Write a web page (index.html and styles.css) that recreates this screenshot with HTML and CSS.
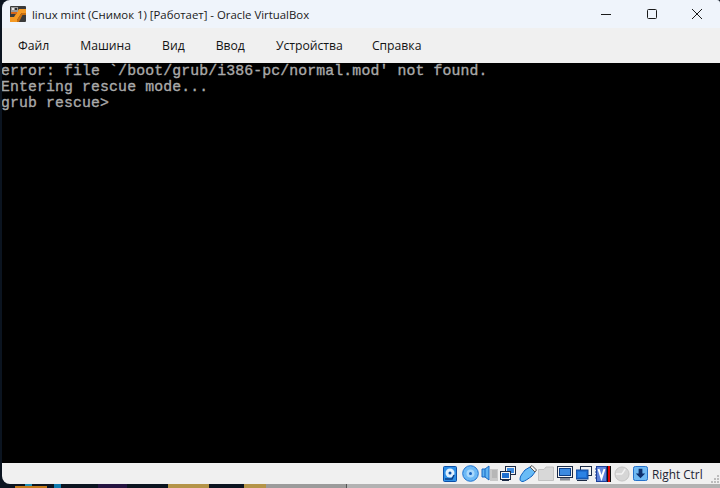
FILE: index.html
```html
<!DOCTYPE html>
<html lang="ru">
<head>
<meta charset="utf-8">
<title>linux mint (Снимок 1) [Работает] - Oracle VirtualBox</title>
<link rel="stylesheet" href="styles.css">
</head>
<body>
<div class="window">
  <header class="titlebar">
    <svg class="app-icon" width="16" height="16" viewBox="0 0 16 16">
      <rect width="16" height="16" rx="1" fill="#3a3a3a"/>
      <path d="M0 16V11H4L9 3H16V7H11.500L7 14V16Z" fill="#f59a24"/>
      <path d="M7 14L11.500 7H16V9H12.500L9 16H7Z" fill="#c96f10"/>
      <rect x="1" y="1" width="7" height="5" fill="#9a9a9a"/>
      <rect x="2" y="2" width="2" height="2" fill="#e8e8e8"/>
      <rect x="5" y="2" width="2" height="2" fill="#333"/>
      <rect x="1" y="6" width="6" height="2" fill="#d4661a"/>
    </svg>
    <span class="title">linux mint (Снимок 1) [Работает] - Oracle VirtualBox</span>
    <div class="controls">
      <span class="ctl"><svg width="10" height="10" viewBox="0 0 10 10"><path d="M0 5.500H10" stroke="#1a1a1a" fill="none"/></svg></span>
      <span class="ctl"><svg width="10" height="10" viewBox="0 0 10 10"><rect x="0.500" y="0.500" width="9" height="9" rx="1" stroke="#1a1a1a" fill="none"/></svg></span>
      <span class="ctl"><svg width="10" height="10" viewBox="0 0 10 10"><path d="M0 0L10 10M10 0L0 10" stroke="#1a1a1a" fill="none"/></svg></span>
    </div>
  </header>
  <nav class="menubar">
    <span>Файл</span><span>Машина</span><span>Вид</span><span>Ввод</span><span>Устройства</span><span class="menu-last">Справка</span>
  </nav>
  <main class="screen">
<pre class="console">error: file `/boot/grub/i386-pc/normal.mod' not found.
Entering rescue mode...
grub rescue&gt;</pre>
  </main>
  <footer class="statusbar">
    <svg class="st hd" width="14" height="16" viewBox="0 0 14 16"><rect x="0.500" y="0.500" width="13" height="15" rx="1" fill="#2f8fe6" stroke="#0b4fa8"/><circle cx="7" cy="7" r="4.500" fill="#dff0ff"/><circle cx="7" cy="7" r="1.500" fill="#0b4fa8"/><path d="M2 13H9L11 9" stroke="#0b3f88" stroke-width="1.500" fill="none"/></svg>
    <svg class="st cd" width="17" height="17" viewBox="0 0 17 17"><circle cx="8.500" cy="8.500" r="7.800" fill="#6db9f5" stroke="#1f73d0"/><circle cx="8.500" cy="8.500" r="4" fill="#a9d8fb"/><circle cx="8.500" cy="8.500" r="1.500" fill="#1660c0"/></svg>
    <svg class="st au" width="17" height="17" viewBox="0 0 17 17"><rect x="9" y="4" width="8" height="12" fill="#c9c9c9"/><path d="M11 6H16M11 8H16M11 10H16M11 12H16" stroke="#a5a5a5"/><path d="M1 4H4L8 1V15L4 12H1Z" fill="#5fb4f2" stroke="#1567c4"/><path d="M4 4V12" stroke="#1567c4"/></svg>
    <svg class="st net" width="16" height="15" viewBox="0 0 16 15"><rect x="5.500" y="0.500" width="10" height="8" fill="#f4f4f4" stroke="#1c2a44"/><rect x="7" y="2" width="7" height="5" fill="#3c8ae0"/><rect x="0.500" y="5.500" width="10" height="8" fill="#f4f4f4" stroke="#1c2a44"/><rect x="2" y="7" width="7" height="5" fill="#1e6fd0"/><path d="M2 14.500H9" stroke="#1c2a44"/></svg>
    <svg class="st usb" width="18" height="17" viewBox="0 0 18 17"><path d="M1 14C1 11 3 9 6 5L11 2L16 7L13 11C9 14 6 16 4 16.500C2 16.500 1 16 1 14Z" fill="#69bcf6" stroke="#0d62c2"/><path d="M11 2L13 0.500L17.500 5L16 7Z" fill="#f5f5f5" stroke="#555"/></svg>
    <svg class="st sf" width="16" height="15" viewBox="0 0 16 15"><path d="M0.500 3.500H6L8 1H15.500V14.500H0.500Z" fill="#d8d8d8" stroke="#c2c2c2"/></svg>
    <svg class="st dp" width="16" height="15" viewBox="0 0 16 15"><rect x="0.500" y="0.500" width="15" height="11" fill="#f4f4f4" stroke="#1c2a44"/><rect x="2.500" y="2.500" width="11" height="7" fill="#3c8ae0" stroke="#0a3f8a"/><path d="M3 13H13" stroke="#1c2a44"/><path d="M3 14.500H13" stroke="#bbb"/></svg>
    <svg class="st cap" width="16" height="15" viewBox="0 0 16 15"><rect x="4.500" y="0.500" width="11" height="9" fill="#f4f4f4" stroke="#1c2a44"/><rect x="0" y="4" width="12" height="9" fill="#1f6fd2" stroke="#0f4596"/><rect x="2" y="6" width="8" height="5" fill="#2b82e4"/><path d="M1 14.500H11" stroke="#1c2a44"/></svg>
    <svg class="st vt" width="12" height="16" viewBox="0 0 12 16"><rect x="1.500" y="0.500" width="10" height="15" fill="#5f82d8" stroke="#1b3f9a"/><path d="M0 3H2M0 6H2M0 9H2M0 12H2" stroke="#1b3f9a"/><path d="M3.500 3L6.500 12L9.500 3" stroke="#fff" stroke-width="2" fill="none"/></svg>
    <span class="cpu"></span>
    <svg class="st ms" width="16" height="16" viewBox="0 0 17 17"><circle cx="8.500" cy="8.500" r="7.500" fill="#d6d6d6" stroke="#c2c2c2"/><path d="M8.500 8.500L12 3M8.500 8.500H2" stroke="#f2f2f2" stroke-width="1.500"/></svg>
    <svg class="st kb" width="15" height="15" viewBox="0 0 16 16"><rect x="0.500" y="0.500" width="15" height="15" rx="2" fill="#6fb9f3" stroke="#1767c6"/><path d="M6 3H10V8H13L8 13L3 8H6Z" fill="#0d2f6c"/></svg>
    <span class="hostkey">Right Ctrl</span>
    <svg class="grip" width="8" height="8" viewBox="0 0 8 8"><path d="M6 0h2v2H6zM3 3h2v2H3zM6 3h2v2H6zM0 6h2v2H0zM3 6h2v2H3zM6 6h2v2H6z" fill="#bdbdbd"/></svg>
  </footer>
</div>
<div class="taskstrip">
  <span class="seg orange"><i class="teal"></i></span>
  <span class="seg blue"></span>
  <span class="seg purple"></span>
  <span class="seg tan"></span>
  <span class="seg tan2"></span>
  <span class="seg gray"></span>
  <span class="seg gray2"></span>
</div>
</body>
</html>
```
FILE: styles.css
```css
* { box-sizing: border-box; }
html, body { margin: 0; padding: 0; }
body {
  width: 720px;
  height: 488px;
  overflow: hidden;
  background: #0b1420;
  display: flex;
  flex-direction: column;
  font-family: "Open Sans", "Noto Sans", sans-serif;
  color: #111;
}
.window {
  height: 484px;
  margin-left: 2px;
  border-radius: 8px 3px 0 8px;
  overflow: hidden;
  display: flex;
  flex-direction: column;
}
.titlebar {
  height: 28px;
  background: #eff4fb;
  display: flex;
  align-items: center;
  padding-left: 8px;
  flex: none;
}
.app-icon { flex: none; }
.title { margin-left: 6px; font-size: 11.380px; color: #1a1a1a; white-space: nowrap; }
.controls { margin-left: auto; display: flex; }
.ctl { width: 45.500px; height: 28px; display: flex; align-items: center; justify-content: center; }
.menubar {
  height: 35px;
  flex: none;
  background: #f0f0f0;
  display: flex;
  align-items: center;
  gap: 31px;
  padding-left: 16px;
  font-size: 12.200px;
  color: #141414;
}
.menu-last { margin-left: -2px; }
.screen { flex: 1; background: #000; overflow: hidden; margin-left: -1px; }
.console {
  margin: 0;
  font-family: "Liberation Mono", monospace;
  font-size: 14.800px;
  letter-spacing: 0.130px;
  line-height: 16px;
  color: #aaa;
  -webkit-text-stroke: 0.350px #aaa;
  white-space: pre;
}
.statusbar {
  height: 21px;
  flex: none;
  background: #f0f0f0;
  display: flex;
  align-items: center;
  padding-left: 441px;
}
.st { flex: none; margin-right: 3px; }
.hd { margin-right: 5px; }
.cd { margin-right: 2px; }
.au { margin-right: 2px; }
.usb { margin-right: 1px; }
.vt { margin-right: 0; }
.cpu { width: 4px; height: 16px; background: #e00000; border-left: 1px solid #111; border-right: 1px solid #111; margin-right: 3px; flex: none; }
.hostkey { font-size: 11.800px; margin-left: 1px; color: #1d2433; white-space: nowrap; }
.grip { margin-left: auto; margin-right: 1px; align-self: flex-end; margin-bottom: 1px; }
.taskstrip { height: 4px; flex: none; display: flex; align-items: flex-end; }
.seg { display: block; height: 4px; flex: none; position: relative; }
.orange { width: 32px; margin-left: 15px; height: 2px; background: #c47a1a; }
.teal { position: absolute; left: 10px; bottom: 2px; width: 7px; height: 2px; background: #1f8fb5; }
.blue { width: 7px; margin-left: 7px; background: #0f7cb0; }
.purple { width: 29px; margin-left: 37px; background: #241440; }
.tan { width: 41px; margin-left: 41px; background: #b49448; }
.tan2 { width: 22px; margin-left: 35px; background: #b49448; }
.gray { width: 80px; background: #9b9b9b; }
.gray2 { flex: 1; background: #b2b2b2; border-left: 1px solid #555; }
```
